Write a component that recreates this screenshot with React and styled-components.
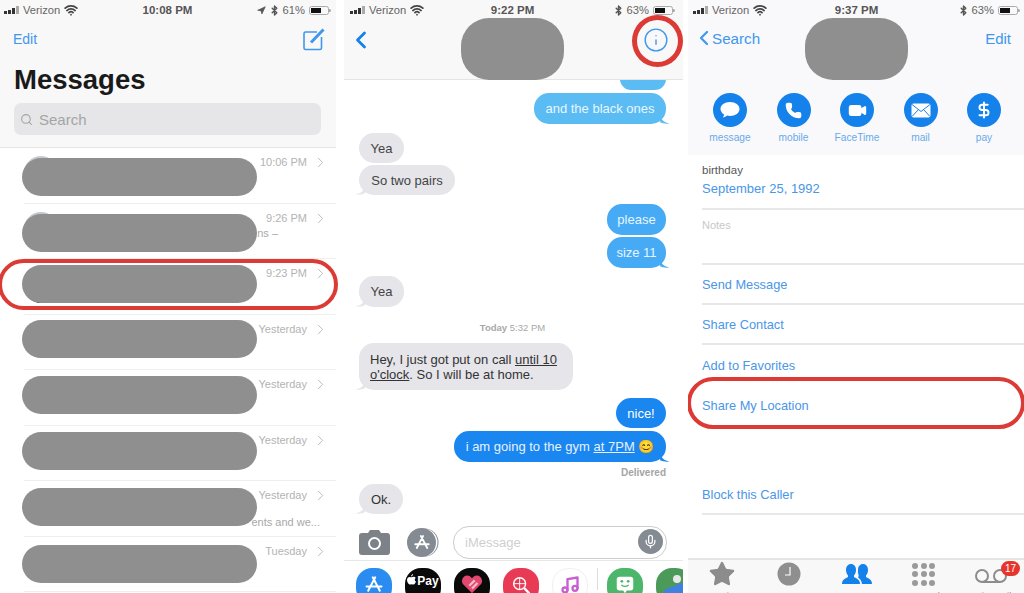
import React from "react";
import styled, { createGlobalStyle } from "styled-components";
import { ChevronLeft, ChevronRight, Info, Search as SearchIcon, Mic, Star, Phone, Video, Music, Navigation, Bluetooth, Wifi, DollarSign } from "lucide-react";

const Global = createGlobalStyle`
  html, body { margin: 0; padding: 0; background: #fff; }
  body { width: 1024px; height: 593px; overflow: hidden; font-family: "Liberation Sans", Arial, sans-serif; }
  #root { width: 1024px; height: 593px; }
`;
const BLUE = "#3f97ee";
const Page = styled.div`display: flex; width: 1024px; height: 593px; background: #fff; overflow: hidden;`;
const Phone1 = styled.section`position: relative; width: 336px; margin-right: 8px; height: 593px; flex: none;`;
const Phone2 = styled.section`position: relative; width: 339px; margin-right: 5px; height: 593px; overflow: hidden; flex: none;`;
const Phone3 = styled.section`position: relative; width: 336px; height: 593px; overflow: hidden; flex: none;`;

const Status = styled.div`display: grid; grid-template-columns: 1fr auto 1fr; align-items: center; height: 20px; padding: 0 ${p => p.$r}px 0 ${p => p.$l}px; color: #666; font-size: 11.2px;`;
const StatusLeft = styled.div`display: flex; align-items: center; gap: 4px;`;
const StatusRight = styled.div`display: flex; align-items: center; justify-content: flex-end; gap: 3px;`;
const Clock = styled.div`font-weight: 700; font-size: 11.5px; color: #555;`;
const Bars = styled.div`display: flex; align-items: flex-end; gap: 1px; height: 8px;`;
const BarTick = styled.i`display: block; width: 3px; height: ${p => p.$h}px; background: ${p => p.$on ? "#333" : "#aaa"};`;
const Batt = styled.div`position: relative; width: 20px; height: 9px; margin-right: 2px; margin-left: 1px; border: 1px solid #aaa; border-radius: 2.5px; padding: 1px; box-sizing: border-box; display: flex;
  &::after { content: ""; position: absolute; right: -3px; top: 2px; width: 2px; height: 3px; background: #aaa; border-radius: 0 2px 2px 0; }`;
const BattFill = styled.i`display: block; background: #111; width: ${p => p.$w}%;`;

function StatusBar({ time, pct, loc, l, r }) {
  return (
    <Status $l={l} $r={r}>
      <StatusLeft>
        <Bars>{[3, 4, 6, 8].map((h, i) => <BarTick key={i} $h={h} $on={i < 3} />)}</Bars>
        <span>Verizon</span>
        <Wifi size={14} strokeWidth={3} color="#444" />
      </StatusLeft>
      <Clock>{time}</Clock>
      <StatusRight>
        {loc && <Navigation size={9} fill="#555" color="#555" />}
        <Bluetooth size={11} strokeWidth={3} color="#555" />
        <span>{pct}</span>
        <Batt><BattFill $w={parseInt(pct)} /></Batt>
      </StatusRight>
    </Status>
  );
}

const Redact = styled.div`position: absolute; background: #8f8f8f; border-radius: ${p => p.$r || 19}px; left: ${p => p.$x}px; top: ${p => p.$y}px; width: ${p => p.$w}px; height: ${p => p.$h}px; z-index: 3;`;
const Ring = styled.div`position: absolute; border: ${p => p.$b || 4}px solid #dc3a34; box-sizing: border-box; left: ${p => p.$x}px; top: ${p => p.$y}px; width: ${p => p.$w}px; height: ${p => p.$h}px; border-radius: ${p => p.$rad}; z-index: 4;`;

/* panel 1 */
const ListHead = styled.header`background: #f8f8f8; height: 148px; box-sizing: border-box; border-bottom: 1px solid #e6e6e6;`;
const ListBar = styled.div`display: flex; align-items: center; justify-content: space-between; padding: 0 10px 0 13px; height: 36px; margin-top: 1px;`;
const NavLink = styled.span`color: ${BLUE}; font-size: ${p => p.$s || 14}px;`;
const BigTitle = styled.h1`margin: 5px 0 0 14px; font-size: 27.5px; line-height: 36px; font-weight: 700; color: #1a1a1a;`;
const SearchBox = styled.div`display: flex; align-items: center; gap: 6px; margin: 5px 15px 0 14px; height: 32px; padding-left: 6px; border-radius: 7px; background: #e6e6e8; color: #a4a4a6; font-size: 15px;`;
const Row = styled.div`position: relative; height: 55.5px; box-sizing: border-box; margin-left: 24px; border-bottom: 1px solid #eee;`;
const Avatar = styled.div`position: absolute; left: ${p => p.$x || 0}px; top: ${p => p.$t}px; width: 34px; height: 34px; border-radius: 50%; background: ${p => p.$c};`;
const RowTime = styled.div`position: absolute; right: 29px; top: 8px; font-size: 11px; color: #b3b3b3;`;
const RowChevron = styled(ChevronRight)`position: absolute; right: 7px; top: 6px; color: #bbb;`;
const RowPreview = styled.div`position: absolute; right: ${p => p.$r}px; top: ${p => p.$t}px; color: #a8a8a8; font-size: 11px; white-space: nowrap;`;

const rows = [
  { t: "10:06 PM", c: "#c8ccd0", at: 8 },
  { t: "9:26 PM", c: "#c0c8d0", at: 8, p: "ns –", pr: 58, pt: 23 },
  { t: "9:23 PM", c: "#222", at: 10 },
  { t: "Yesterday", c: "#9aa4ae", at: 9 },
  { t: "Yesterday", c: "#a2a8ae", at: 9, x: 14 },
  { t: "Yesterday", c: "#7c8a4a", at: 8 },
  { t: "Yesterday", c: "#222", at: 10, p: "ents and we...", pr: 16, pt: 35 },
  { t: "Tuesday", c: "#a2a8ae", at: 8, x: 14 },
];
const redY = [158, 214, 265, 320, 376, 432, 488, 545];

/* panel 2 */
const ChatHead = styled.header`position: relative; z-index: 2; background: #f8f8f8; height: 80px; border-bottom: 1px solid #e4e4e4; box-sizing: border-box;`;
const ChatBar = styled.div`display: flex; justify-content: space-between; align-items: center; height: 40px; padding: 0 14px 0 3px;`;
const Thread = styled.div`display: flex; flex-direction: column; padding: 0 17px 0 15px; margin-top: -15px;`;
const Bubble = styled.div`
  align-self: ${p => p.$me ? "flex-end" : "flex-start"};
  width: ${p => p.$w}px; height: ${p => p.$h || 30}px; margin-top: ${p => p.$m || 3}px;
  box-sizing: border-box; padding: 0 ${p => p.$p || 6}px; display: flex; align-items: center; justify-content: ${p => p.$jc || "center"};
  border-radius: 15px; font-size: 13px; line-height: 15px;
  background: ${p => p.$bg}; color: ${p => p.$fg};
  position: relative;
`;
const Tail = styled.svg`position: absolute; bottom: 0; ${p => p.$me ? "right: -4px;" : "left: -4px;"} width: 10px; height: 9px;`;
const DayStamp = styled.div`text-align: center; font-size: 9.5px; color: #a8a8a8; margin-top: 15px; line-height: 12px;`;
const DayBold = styled.b`font-weight: 700;`;
const Delivered = styled.div`text-align: right; font-size: 10px; font-weight: 700; color: #a4a4a4; margin-top: 5px; line-height: 12px;`;
const Composer = styled.div`position: absolute; left: 0; right: 0; bottom: 0; height: 69px; background: #fff;`;
const InputRow = styled.div`display: flex; align-items: center; height: 37px; padding: 0 16px 0 15px; gap: 17px; border-bottom: 1px solid #e8e8e8; box-sizing: border-box;`;
const RoundGray = styled.div`position: relative; width: 29px; height: 29px; border-radius: 50%; background: #858b93; flex: none; color: #fff; display: flex; align-items: center; justify-content: center; box-shadow: 2px 0 0 -0.5px #fff, 3px 0 0 -0.5px #858b93;`;
const InputBox = styled.div`position: relative; flex: 1; height: 31px; border: 1px solid #ccc; border-radius: 16px; display: flex; align-items: center; padding-left: 11px; font-size: 13px; color: #cfcfcf;`;
const MicBtn = styled.div`position: absolute; right: 3px; top: 2px; width: 25px; height: 25px; border-radius: 50%; background: #858b93; display: flex; align-items: center; justify-content: center; color: #fff;`;
const Apps = styled.div`display: flex; gap: 13px; padding: 7px 0 0 12px; align-items: flex-start;`;
const AppIcon = styled.div`width: 36px; height: 36px; border-radius: 16px; flex: none; background: ${p => p.$bg}; color: #fff; display: flex; align-items: flex-start; padding-top: 6px; box-sizing: border-box; justify-content: center; gap: 1px; font-size: 12px; font-weight: 700; ${p => p.$border ? "border: 1px solid #f0f0f0;" : ""}`;
const AppDivider = styled.div`width: 1px; height: 22px; background: #ddd; flex: none; margin: 0 -4px;`;

/* panel 3 */
const ContactHead = styled.header`background: #f9f9fb; height: 155px; box-sizing: border-box;`;
const ContactBar = styled.div`display: flex; justify-content: space-between; align-items: center; height: 36px; padding: 0 13px 0 4px;`;
const BackLink = styled.span`display: flex; align-items: center; color: ${BLUE}; font-size: 15.2px;
  svg { margin-right: -4px; }`;
const Actions = styled.div`display: flex; justify-content: space-between; margin-top: 37px; padding: 0 23px 0 25px;`;
const ActionItem = styled.div`display: flex; flex-direction: column; align-items: center; width: 34px; gap: 5px; font-size: 10.2px; color: #6aa9ea; white-space: nowrap;`;
const ActionCircle = styled.div`width: 34px; height: 34px; border-radius: 50%; background: #1581ea; color: #fff; display: flex; align-items: center; justify-content: center;`;
const Detail = styled.div`padding-left: 14px;`;
const Field = styled.div`height: ${p => p.$h}px; box-sizing: border-box; border-bottom: ${p => p.$nb ? "none" : "2px solid #e8e8e8"}; display: flex; flex-direction: column; justify-content: center; color: #4a96e8; font-size: 12.8px;`;
const InfoField = styled(Field)`justify-content: flex-start; padding-top: 8px;`;
const BottomField = styled(Field)`justify-content: flex-end; padding-bottom: 11px;`;
const SmallLabel = styled.div`color: ${p => p.$c}; font-size: ${p => p.$s}px; line-height: 14px;`;
const DateLink = styled.div`color: #4a96e8; font-size: 13px; line-height: 20px; margin-top: 2px;`;
const Tabs = styled.nav`position: absolute; left: 0; right: 0; bottom: 0; height: 35px; background: #f8f8f8; border-top: 2px solid #e4e4e4; display: flex; justify-content: space-between; padding: 0 17px 0 18px; box-sizing: border-box; align-items: flex-start; overflow: hidden;`;
const TabSlot = styled.div`position: relative; width: 32px; display: flex; flex-direction: column; align-items: center; color: ${p => p.$on ? "#1581ea" : "#8c8c8c"}; font-size: 9.5px; line-height: 11px; white-space: nowrap;`;
const TabIcon = styled.div`height: 28px; margin-bottom: 2px; display: flex; align-items: center; justify-content: center;`;
const Badge = styled.div`position: absolute; top: 1px; right: -13px; width: 19px; height: 15px; border-radius: 8px; background: #e5352c; color: #fff; font-size: 10px; display: flex; align-items: center; justify-content: center;`;
const Dots = styled.div`display: grid; grid-template-columns: repeat(3, 6px); gap: 2.5px;`;
const Dot = styled.i`display: block; width: 6px; height: 6px; border-radius: 50%; background: #9a9a9a;`;

function BubbleTail({ me, color }) {
  return (
    <Tail $me={me} viewBox="0 0 12 11">
      {me
        ? <path d="M0 0 C1 6 5 9 12 10.5 C7 11 3 10.5 0 9 Z" fill={color} />
        : <path d="M12 0 C11 6 7 9 0 10.5 C5 11 9 10.5 12 9 Z" fill={color} />}
    </Tail>
  );
}
const StoreGlyph = ({ size }) => (
  <svg width={size} height={size} viewBox="0 0 24 24" fill="none" stroke="#fff" strokeWidth="2.4" strokeLinecap="round"><path d="M13.5 4 L5 20 M10.5 4 L19 20 M3 15 H21" /></svg>
);
const GRAY = "#e5e5ea";
const LIGHT = "#5bbcf4";
const MID = "#47aaf5";
const DEEP = "#1a86f0";

export default function App() {
  return (
    <Page>
      <Global />
      <Phone1>
        <ListHead>
          <StatusBar time="10:08 PM" pct="61%" loc l={4} r={5} />
          <ListBar>
            <NavLink>Edit</NavLink>
            <svg width="24" height="24" viewBox="0 0 24 24" fill="none" stroke={BLUE} strokeWidth="1.6">
              <path d="M15 5 H3.5 A1.5 1.5 0 0 0 2 6.5 V21 A1.5 1.5 0 0 0 3.5 22.5 H18 A1.5 1.5 0 0 0 19.5 21 V10" />
              <path d="M9 15.5 L21.5 2.5" strokeWidth="3" />
            </svg>
          </ListBar>
          <BigTitle>Messages</BigTitle>
          <SearchBox>
            <SearchIcon size={13} />
            <span>Search</span>
          </SearchBox>
        </ListHead>
        {rows.map((r, i) => (
          <Row key={i}>
            <Avatar $t={r.at} $c={r.c} $x={r.x} />
            <RowTime>{r.t}</RowTime>
            <RowChevron size={17} strokeWidth={1.4} />
            {r.p && <RowPreview $t={r.pt} $r={r.pr}>{r.p}</RowPreview>}
          </Row>
        ))}
        {redY.map(y => <Redact key={y} $x={22} $y={y} $w={235} $h={38} />)}
        <Ring $x={-2} $y={259} $w={340} $h={51} $rad="26px" />
      </Phone1>

      <Phone2>
        <ChatHead>
          <StatusBar time="9:22 PM" pct="63%" l={6} r={8} />
          <ChatBar>
            <ChevronLeft size={28} color="#1581ea" strokeWidth={2.4} />
            <Info size={26} color={BLUE} strokeWidth={1.3} />
          </ChatBar>
        </ChatHead>
        <Thread>
          <Bubble $me $w={46} $h={22} $bg={LIGHT} $fg="#fff" />
          <Bubble $me $w={132} $h={31} $bg={LIGHT} $fg="#e8f6ff">and the black ones<BubbleTail me color={LIGHT} /></Bubble>
          <Bubble $w={45} $m={9} $bg={GRAY} $fg="#444">Yea</Bubble>
          <Bubble $w={96} $m={2} $bg={GRAY} $fg="#444">So two pairs<BubbleTail color={GRAY} /></Bubble>
          <Bubble $me $w={59} $m={9} $h={31} $bg={MID} $fg="#e8f6ff">please</Bubble>
          <Bubble $me $w={59} $m={2} $h={31} $bg={MID} $fg="#e8f6ff">size 11<BubbleTail me color={MID} /></Bubble>
          <Bubble $w={45} $m={8} $h={31} $bg={GRAY} $fg="#444">Yea<BubbleTail color={GRAY} /></Bubble>
          <DayStamp><DayBold>Today</DayBold> 5:32 PM</DayStamp>
          <Bubble $w={214} $m={9} $h={47} $p={11} $jc="flex-start" $bg={GRAY} $fg="#333">
            <span>Hey, I just got put on call <u>until 10</u> <u>o'clock</u>. So I will be at home.</span>
            <BubbleTail color={GRAY} />
          </Bubble>
          <Bubble $me $w={50} $m={8} $bg={DEEP} $fg="#fff">nice!</Bubble>
          <Bubble $me $w={212} $m={3} $h={31} $bg={DEEP} $fg="#e6f2ff">
            <span>i am going to the gym <u>at 7PM</u> 😊</span>
            <BubbleTail me color={DEEP} />
          </Bubble>
          <Delivered>Delivered</Delivered>
          <Bubble $w={44} $m={5} $bg={GRAY} $fg="#333">Ok.<BubbleTail color={GRAY} /></Bubble>
        </Thread>
        <Composer>
          <InputRow>
            <svg width="31" height="26" viewBox="0 0 31 26"><path fillRule="evenodd" fill="#7d8288" d="M3 4 H9 L11 1 H20 L22 4 H28 A3 3 0 0 1 31 7 V23 A3 3 0 0 1 28 26 H3 A3 3 0 0 1 0 23 V7 A3 3 0 0 1 3 4 Z M15.5 8 A6.5 6.5 0 1 0 15.5 21 A6.5 6.5 0 1 0 15.5 8 Z M15.5 10 A4.5 4.5 0 1 1 15.5 19 A4.5 4.5 0 1 1 15.5 10 Z" /></svg>
            <RoundGray><StoreGlyph size={18} /></RoundGray>
            <InputBox>
              iMessage
              <MicBtn><Mic size={15} /></MicBtn>
            </InputBox>
          </InputRow>
          <Apps>
            <AppIcon $bg="#2a8cf0"><StoreGlyph size={20} /></AppIcon>
            <AppIcon $bg="#0a0a0a">
              <svg width="9" height="12" viewBox="0 0 9 12" fill="#fff"><path d="M6 0 C6 1.5 5 2.5 4 2.6 C4 1.4 5 .3 6 0 Z M4.5 3.2 C5.3 3.2 6 2.7 6.9 2.8 C7.7 2.9 8.3 3.3 8.7 3.9 C7.3 4.8 7.6 6.9 9 7.5 C8.6 8.9 7.5 10.6 6.5 10.6 C5.8 10.6 5.4 10.2 4.6 10.2 C3.8 10.2 3.4 10.6 2.7 10.6 C1.5 10.6 0 8.2 0 6.1 C0 4 1.4 2.9 2.6 2.9 C3.4 2.9 4 3.2 4.5 3.2 Z" /></svg>
              Pay
            </AppIcon>
            <AppIcon $bg="#0a0a0a">
              <svg width="22" height="20" viewBox="0 0 24 22"><path fill="#e2486e" d="M12 21 L2.5 11.5 A5.8 5.8 0 0 1 11 3.6 L12 4.8 L13 3.6 A5.8 5.8 0 0 1 21.5 11.5 Z" /><path d="M12 16 L18 10 M9 13 L15 7" stroke="#f5c0cc" strokeWidth="2.4" /></svg>
            </AppIcon>
            <AppIcon $bg="#e93a55">
              <svg width="22" height="22" viewBox="0 0 24 24" fill="none" stroke="#fff" strokeWidth="1.6"><circle cx="10.5" cy="10.5" r="6.5" /><path d="M15.5 15.5 L21 21" strokeWidth="2.6" /><path d="M4 10.5 H17 M10.5 4 V17" strokeWidth="1" /></svg>
            </AppIcon>
            <AppIcon $bg="#fff" $border><Music size={20} color="#c85fd0" strokeWidth={2.8} /></AppIcon>
            <AppDivider />
            <AppIcon $bg="#4cb66a">
              <svg width="22" height="22" viewBox="0 0 24 24"><path fill="#fff" d="M6 3 H18 A3 3 0 0 1 21 6 V15 A3 3 0 0 1 18 18 H14 L12 21 L10 18 H6 A3 3 0 0 1 3 15 V6 A3 3 0 0 1 6 3 Z" /><circle cx="8.5" cy="8" r="1.5" fill="#4cb66a" /><circle cx="15.5" cy="8" r="1.5" fill="#4cb66a" /><path d="M8 12 Q12 15 16 12" stroke="#4cb66a" strokeWidth="1.5" fill="none" /></svg>
            </AppIcon>
            <AppIcon $bg="#4c9a5a">
              <svg width="20" height="20" viewBox="0 0 20 20"><circle cx="13" cy="5" r="4" fill="#e8e8e8" /><path d="M0 16 L20 8 V20 H0 Z" fill="#3f80e0" /></svg>
            </AppIcon>
          </Apps>
        </Composer>
        <Redact $x={117} $y={18} $w={103} $h={62} $r={28} />
        <Ring $x={288} $y={15} $w={51} $h={52} $b={5} $rad="50%" />
      </Phone2>

      <Phone3>
        <ContactHead>
          <StatusBar time="9:37 PM" pct="63%" l={5} r={4} />
          <ContactBar>
            <BackLink><ChevronLeft size={24} strokeWidth={2.2} />Search</BackLink>
            <NavLink $s={15}>Edit</NavLink>
          </ContactBar>
          <Actions>
            <ActionItem>
              <ActionCircle>
                <svg width="22" height="20" viewBox="0 0 22 20" fill="#fff"><path d="M11 2 C16.5 2 20.5 5 20.5 9 C20.5 13 16.5 16 11 16 C10 16 9 15.9 8 15.6 C7 16.7 5.4 17.5 3.8 17.5 C4.6 16.6 5 15.6 5.1 14.5 C2.9 13.2 1.5 11.2 1.5 9 C1.5 5 5.5 2 11 2 Z" /></svg>
              </ActionCircle>
              message
            </ActionItem>
            <ActionItem><ActionCircle><Phone size={17} fill="#fff" /></ActionCircle>mobile</ActionItem>
            <ActionItem><ActionCircle><Video size={19} fill="#fff" /></ActionCircle>FaceTime</ActionItem>
            <ActionItem>
              <ActionCircle>
                <svg width="20" height="15" viewBox="0 0 20 15"><rect x="0.5" y="0.5" width="19" height="14" rx="2" fill="#fff" /><path d="M1 1.5 L10 8.5 L19 1.5 M1 13.5 L7.5 6.5 M19 13.5 L12.5 6.5" stroke="#1581ea" strokeWidth="1" fill="none" /></svg>
              </ActionCircle>
              mail
            </ActionItem>
            <ActionItem><ActionCircle><DollarSign size={18} strokeWidth={2.6} /></ActionCircle>pay</ActionItem>
          </Actions>
        </ContactHead>
        <Detail>
          <InfoField $h={55}>
            <SmallLabel $c="#555" $s={11.5}>birthday</SmallLabel>
            <DateLink>September 25, 1992</DateLink>
          </InfoField>
          <InfoField $h={55}>
            <SmallLabel $c="#c8c8c8" $s={11}>Notes</SmallLabel>
          </InfoField>
          <Field $h={40}>Send Message</Field>
          <Field $h={40}>Share Contact</Field>
          <Field $h={40} $nb>Add to Favorites</Field>
          <Field $h={40} $nb>Share My Location</Field>
          <BottomField $h={90}>Block this Caller</BottomField>
        </Detail>
        <Tabs>
          <TabSlot><TabIcon><Star size={28} fill="#8c8c8c" strokeWidth={1} /></TabIcon>Favorites</TabSlot>
          <TabSlot>
            <TabIcon><svg width="24" height="24" viewBox="0 0 24 24"><circle cx="12" cy="12" r="11.5" fill="#8f8f8f" /><path d="M13 5 V13 H8" fill="none" stroke="#fff" strokeWidth="1.2" /></svg></TabIcon>
            Recents
          </TabSlot>
          <TabSlot $on>
            <TabIcon>
              <svg width="32" height="24" viewBox="0 0 32 24" fill="#1581ea"><path d="M10 2 C13 2 15 4.5 15 8 C15 10.5 14 12.5 13 13.5 V15 C15 16.5 19 17 19 22 H1 C1 17 5 16.5 7 15 V13.5 C6 12.5 5 10.5 5 8 C5 4.5 7 2 10 2 Z" /><path d="M22 2 C25 2 27 4.5 27 8 C27 10.5 26 12.5 25 13.5 V15 C27 16.5 31 17 31 22 H21 C20.8 18.5 18.5 16.5 17 15.5 C17.5 15 17.8 14 17.6 13 C17 12 17 10 17 8 C17 4.5 19 2 22 2 Z" /></svg>
            </TabIcon>
            Contacts
          </TabSlot>
          <TabSlot><TabIcon><Dots>{Array.from({ length: 9 }, (_, i) => <Dot key={i} />)}</Dots></TabIcon>Keypad</TabSlot>
          <TabSlot>
            <TabIcon><svg width="34" height="20" viewBox="0 0 34 20" fill="none" stroke="#8c8c8c" strokeWidth="2"><circle cx="8" cy="12" r="6" /><circle cx="26" cy="12" r="6" /><path d="M8 18 H26" /></svg></TabIcon>
            Voicemail
            <Badge>17</Badge>
          </TabSlot>
        </Tabs>
        <Redact $x={117} $y={18} $w={103} $h={62} $r={28} />
        <Ring $x={-1} $y={377} $w={338} $h={52} $rad="26px" />
      </Phone3>
    </Page>
  );
}
